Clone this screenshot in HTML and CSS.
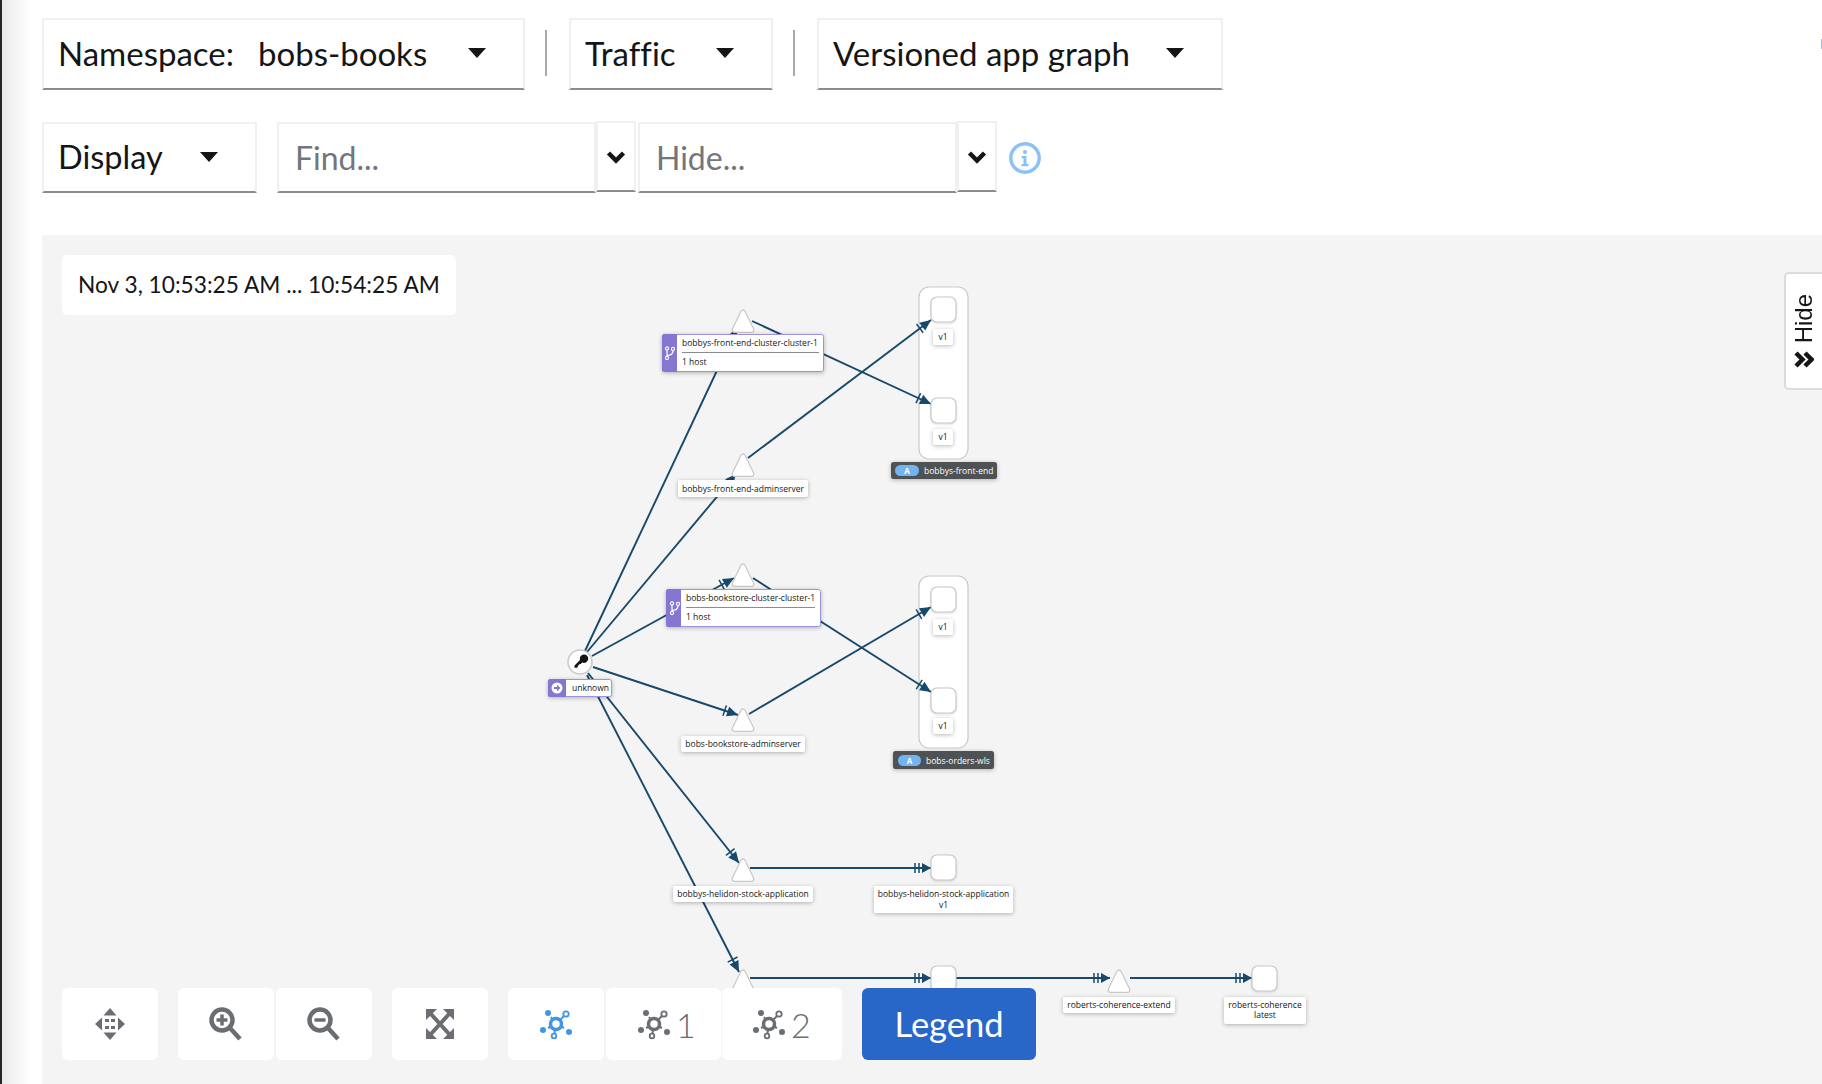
FILE: index.html
```html
<!DOCTYPE html>
<html lang="en">
<head>
  <meta charset="UTF-8">
  <title>Graph</title>
  <link rel="stylesheet" href="styles.css">
</head>
<body>
  <div id="page">
    <i class="corner-mark"></i>

    <div class="toolbar row-one">
      <div class="select select-namespace">
        <span class="select-label">Namespace:</span><span>bobs-books</span><i class="caret"></i>
      </div>
      <i class="sep"></i>
      <div class="select select-traffic"><span>Traffic</span><i class="caret"></i></div>
      <i class="sep"></i>
      <div class="select select-graph"><span>Versioned app graph</span><i class="caret"></i></div>
    </div>

    <div class="toolbar row-two">
      <div class="select select-display"><span>Display</span><i class="caret"></i></div>
      <input class="find find-first" placeholder="Find...">
      <button class="chevron-btn">
        <svg width="20" height="14" viewBox="0 0 20 14"><path class="chevron" d="M2.500 3 10 10.500 17.500 3"/></svg>
      </button>
      <input class="find" placeholder="Hide...">
      <button class="chevron-btn">
        <svg width="20" height="14" viewBox="0 0 20 14"><path class="chevron" d="M2.500 3 10 10.500 17.500 3"/></svg>
      </button>
      <svg class="info" width="32" height="32" viewBox="0 0 32 32">
        <circle cx="16" cy="16" r="14.200" fill="none" stroke="#8bc1f7" stroke-width="3.400"/>
        <circle cx="16" cy="10" r="2" fill="#8bc1f7"/>
        <path d="M12.500 14h5v8h2v2.200h-7V22h2v-5.800h-2z" fill="#8bc1f7"/>
      </svg>
    </div>

    <div id="graph">
      <svg class="canvas" width="1780" height="849" viewBox="42 235 1780 849">
        <defs>
          <marker id="arrow" markerUnits="userSpaceOnUse" markerWidth="18" markerHeight="14" viewBox="0 -7 18 14" refX="17" refY="0" orient="auto">
            <path class="arrow-head" d="M6 -5 17 0 6 5z"/>
            <path class="arrow-tick" d="M3 -5.500V5.500"/>
          </marker>
          <marker id="arrow2" markerUnits="userSpaceOnUse" markerWidth="20" markerHeight="14" viewBox="0 -7 20 14" refX="19" refY="0" orient="auto">
            <path class="arrow-head" d="M10 -5 19 0 10 5z"/>
            <path class="arrow-tick" d="M3 -5V5M7 -5V5"/>
          </marker>
          <g id="tri">
            <path class="tri-out" d="M0 -8.500 -8.500 9H8.500z"/>
            <path class="tri-in" d="M0 -8.500 -8.500 9H8.500z"/>
          </g>
          <rect id="box" class="box" width="25" height="25" rx="6"/>
        </defs>

        <rect class="group" x="919" y="287" width="49" height="172" rx="10"/>
        <rect class="group" x="919" y="576" width="49" height="172" rx="10"/>

        <g class="edges">
          <path d="M585 651 737 328" marker-end="url(#arrow)"/>
          <path d="M752 321 931 404" marker-end="url(#arrow)"/>
          <path d="M587 652 736 474" marker-end="url(#arrow)"/>
          <path d="M748 458 931 320" marker-end="url(#arrow)"/>
          <path d="M592 656 734 578" marker-end="url(#arrow)"/>
          <path d="M753 578 931 692" marker-end="url(#arrow)"/>
          <path d="M593 667 738 715" marker-end="url(#arrow)"/>
          <path d="M749 714 931 607" marker-end="url(#arrow)"/>
          <path d="M588 673 739 863" marker-end="url(#arrow)"/>
          <path d="M587 675 739 972" marker-end="url(#arrow)"/>
          <path d="M750 868H931" marker-end="url(#arrow2)"/>
          <path d="M750 978H931" marker-end="url(#arrow2)"/>
          <path d="M956 978H1110" marker-end="url(#arrow2)"/>
          <path d="M1130 978H1252" marker-end="url(#arrow2)"/>
        </g>

        <use href="#tri" x="743" y="321"/>
        <use href="#tri" x="743" y="465"/>
        <use href="#tri" x="743" y="575"/>
        <use href="#tri" x="743" y="720"/>
        <use href="#tri" x="743" y="870"/>
        <use href="#tri" x="743" y="981"/>
        <use href="#tri" x="1119" y="981"/>

        <use href="#box" x="931" y="297"/>
        <use href="#box" x="931" y="398"/>
        <use href="#box" x="931" y="587"/>
        <use href="#box" x="931" y="688"/>
        <use href="#box" x="931" y="855"/>
        <use href="#box" x="931" y="966"/>
        <use href="#box" x="1252" y="966"/>

        <!-- cluster boxes -->
        <rect class="cluster-box" x="662.500" y="334.500" width="161" height="37" rx="2"/>
        <path class="cluster-side" d="M664.500 334H677V372H664.500a2.500 2.500 0 0 1-2.500-2.500V336.500a2.500 2.500 0 0 1 2.500-2.500z"/>
        <path class="cluster-icon" transform="translate(660 346)" d="M7 3V12M7 9.500c4 0 6-1.500 6-5"/>
        <g class="cluster-dots" transform="translate(660 346)"><circle cx="7" cy="2.500" r="1.600"/><circle cx="7" cy="12" r="1.600"/><circle cx="13" cy="3" r="1.600"/></g>
        <text class="label" x="682" y="346">bobbys-front-end-cluster-cluster-1</text>
        <path class="cluster-rule" d="M682 352.500H819"/>
        <text class="label" x="682" y="365">1 host</text>

        <rect class="cluster-box" x="666.500" y="589.500" width="154" height="37" rx="2"/>
        <path class="cluster-side" d="M668.500 589H681V627H668.500a2.500 2.500 0 0 1-2.500-2.500V591.500a2.500 2.500 0 0 1 2.500-2.500z"/>
        <path class="cluster-icon" transform="translate(665 601)" d="M7 3V12M7 9.500c4 0 6-1.500 6-5"/>
        <g class="cluster-dots" transform="translate(665 601)"><circle cx="7" cy="2.500" r="1.600"/><circle cx="7" cy="12" r="1.600"/><circle cx="13" cy="3" r="1.600"/></g>
        <text class="label" x="686" y="601">bobs-bookstore-cluster-cluster-1</text>
        <path class="cluster-rule" d="M686 607.500H815"/>
        <text class="label" x="686" y="620">1 host</text>

        <!-- version labels -->
        <rect class="tag" x="933" y="329" width="20" height="16" rx="2"/><text class="label mid" x="943" y="340">v1</text>
        <rect class="tag" x="933" y="429" width="20" height="16" rx="2"/><text class="label mid" x="943" y="440">v1</text>
        <rect class="tag" x="933" y="619" width="20" height="16" rx="2"/><text class="label mid" x="943" y="630">v1</text>
        <rect class="tag" x="933" y="718" width="20" height="16" rx="2"/><text class="label mid" x="943" y="729">v1</text>

        <!-- app group labels -->
        <rect class="group-tag" x="891" y="462" width="106" height="17" rx="2.500"/>
        <rect class="pill" x="895" y="465" width="24" height="11" rx="5.500"/>
        <text class="pill-text" x="907" y="473.500">A</text>
        <text class="label on-dark" x="924" y="473.500">bobbys-front-end</text>

        <rect class="group-tag" x="893" y="751" width="101" height="18" rx="2.500"/>
        <rect class="pill" x="898" y="755" width="23" height="11" rx="5.500"/>
        <text class="pill-text" x="909.500" y="763.500">A</text>
        <text class="label on-dark" x="926" y="763.500">bobs-orders-wls</text>

        <!-- service and workload labels -->
        <rect class="tag" x="678" y="480" width="130" height="17" rx="2"/><text class="label mid" x="743" y="492">bobbys-front-end-adminserver</text>
        <rect class="tag" x="681" y="736" width="124" height="16" rx="2"/><text class="label mid" x="743" y="747">bobs-bookstore-adminserver</text>
        <rect class="tag" x="673" y="886" width="140" height="16" rx="2"/><text class="label mid" x="743" y="897">bobbys-helidon-stock-application</text>
        <rect class="tag" x="874" y="886" width="139" height="27" rx="2"/>
        <text class="label mid" x="943.500" y="897">bobbys-helidon-stock-application</text>
        <text class="label mid" x="943.500" y="908">v1</text>
        <rect class="tag" x="1063" y="997" width="112" height="16" rx="2"/><text class="label mid" x="1119" y="1008">roberts-coherence-extend</text>
        <rect class="tag" x="1224" y="997" width="82" height="27" rx="2"/>
        <text class="label mid" x="1265" y="1008">roberts-coherence</text>
        <text class="label mid" x="1265" y="1018">latest</text>

        <!-- unknown node -->
        <circle class="source" cx="580" cy="662" r="12"/>
        <path class="key" d="M583.500 654.500a4.200 4.200 0 1 1-1.300 7.900l-1.500 1.500h-1.400v1.400h-1.400v1.400l-1.100 1.100h-2.300v-2.300l5.500-5.500a4.200 4.200 0 0 1 3.800-5.500z"/>
        <rect class="cluster-box" x="548.500" y="679.500" width="63" height="17" rx="2"/>
        <path class="cluster-side" d="M550.500 679H566V697H550.500a2.500 2.500 0 0 1-2.500-2.500V681.500a2.500 2.500 0 0 1 2.500-2.500z"/>
        <circle cx="557" cy="688" r="5.500" fill="#fff"/>
        <path d="M554 687h3v-2.500l3.300 3.500-3.300 3.500V689h-3z" fill="#8476d1"/>
        <text class="label" x="572" y="691">unknown</text>
      </svg>

      <div class="time-box">Nov 3, 10:53:25 AM ... 10:54:25 AM</div>

      <div class="hide-tab">
        <span class="hide-text">Hide</span>
        <svg width="20" height="17" viewBox="0 0 20 17"><path class="chevron" d="M2 2 8.500 8.500 2 15M11 2 17.500 8.500 11 15"/></svg>
      </div>

      <div class="controls">
        <div class="ctl ctl-square gap-big">
          <svg width="30" height="32" viewBox="0 0 30 32" fill="#6a6e73">
            <path d="M15 0 21.500 7.500H8.500zM15 32 8.500 24.500H21.500zM0 16 7 9.500V22.500zM30 16 23 22.500V9.500z"/>
            <path d="M10 11h4v3h-4zM16 11h4v3h-4zM10 18h4v3h-4zM16 18h4v3h-4z"/>
          </svg>
        </div>
        <div class="ctl ctl-square gap-small">
          <svg width="34" height="34" viewBox="0 0 34 34"><circle class="lens" cx="13" cy="13" r="10.500"/><path class="lens" d="M21 21 31 32"/><path class="lens-mark" d="M7.500 13H18.500M13 7.500V18.500"/></svg>
        </div>
        <div class="ctl ctl-square gap-big">
          <svg width="34" height="34" viewBox="0 0 34 34"><circle class="lens" cx="13" cy="13" r="10.500"/><path class="lens" d="M21 21 31 32"/><path class="lens-mark" d="M7.500 13H18.500"/></svg>
        </div>
        <div class="ctl ctl-square gap-big">
          <svg width="28" height="30" viewBox="0 0 28 30" fill="#6a6e73">
            <path d="M0 0H11L0 11zM28 0V11L17 0zM0 30V19L11 30zM28 30H17L28 19z"/>
            <path class="fit-cross" d="M4 4 24 26M24 4 4 26"/>
          </svg>
        </div>
        <div class="ctl ctl-square gap-small net-active">
          <svg class="net" width="34" height="34" viewBox="0 0 34 34">
            <use href="#net-icon"/>
          </svg>
        </div>
        <div class="ctl ctl-one gap-tiny net-idle">
          <svg class="net" width="34" height="34" viewBox="0 0 34 34"><use href="#net-icon"/></svg><span>1</span>
        </div>
        <div class="ctl ctl-two gap-big net-idle">
          <svg class="net" width="34" height="34" viewBox="0 0 34 34"><use href="#net-icon"/></svg><span>2</span>
        </div>
        <div class="ctl legend">Legend</div>
      </div>

      <svg class="icon-defs" width="0" height="0">
        <g id="net-icon">
          <path class="net-line" d="M17 17 12 10M17 17 27 7M17 17 9 21M17 17 25 21M17 17 15 29"/>
          <circle class="net-ring" cx="17" cy="17" r="5.500"/>
          <circle class="net-dot" cx="9" cy="6" r="3"/>
          <circle class="net-hollow" cx="27" cy="7" r="2.700"/>
          <circle class="net-dot" cx="4" cy="23" r="3"/>
          <circle class="net-dot" cx="30" cy="25" r="3"/>
          <circle class="net-hollow" cx="15" cy="29" r="2.300"/>
        </g>
      </svg>
    </div>
  </div>
</body>
</html>
```

FILE: styles.css
```css
* {
  box-sizing: border-box;
}

html, body {
  margin: 0;
  height: 100%;
  overflow: hidden;
}

body {
  background: #fff;
  font-family: "Lato", "Open Sans", sans-serif;
  font-variant-ligatures: none;
  color: #151515;
}

#page {
  position: relative;
  height: 1084px;
  padding-left: 40px;
  border-left: 2px solid #26262b;
  background: linear-gradient(to right, #eaeaea 0, #fff 28px);
}

.corner-mark {
  position: absolute;
  right: 0;
  top: 39px;
  width: 1px;
  height: 10px;
  background: #a5b8e0;
}

.toolbar {
  display: flex;
  align-items: flex-start;
}

.row-one {
  padding-top: 18px;
  height: 122px;
}

.row-two {
  height: 114px;
  margin-top: -1px;
}

.select {
  display: flex;
  align-items: center;
  height: 72px;
  padding: 0 37px 2px 14px;
  background: #fff;
  border: 2px solid #f0f0f0;
  border-bottom-color: #8a8d90;
  font-size: 33px;
  white-space: nowrap;
}

.select-namespace { width: 483px; }
.select-traffic { width: 204px; }
.select-graph { width: 406px; }

.select-display {
  width: 215px;
  height: 71px;
  margin-top: 1px;
  font-size: 32.500px;
}

.select-label {
  width: 200px;
}

.caret {
  margin-left: auto;
  width: 0;
  height: 0;
  border-left: 9.500px solid transparent;
  border-right: 9.500px solid transparent;
  border-top: 10px solid #151515;
}

.sep {
  width: 2px;
  height: 46px;
  margin: 12px 20px 0 20px;
  background: #a8aaad;
}

.select-traffic, .select-graph {
  margin-left: 2px;
}

.find {
  width: 319px;
  height: 71px;
  margin-top: 1px;
  padding: 0 16px;
  background: #fff;
  border: 2px solid #f0f0f0;
  border-bottom-color: #8a8d90;
  border-radius: 0;
  outline: none;
  font-family: inherit;
  font-size: 32px;
  color: #151515;
}

.find-first {
  margin-left: 20px;
}

.find::placeholder {
  color: #72767b;
  opacity: 1;
}

.chevron-btn {
  display: flex;
  align-items: center;
  justify-content: center;
  width: 40px;
  height: 71px;
  padding: 0;
  background: #fff;
  border: 2px solid #f0f0f0;
  border-bottom-color: #8a8d90;
  border-radius: 0;
}

.chevron-btn + .find {
  margin-left: 2px;
}

.chevron {
  fill: none;
  stroke: #151515;
  stroke-width: 4.500;
}

.info {
  margin: 21px 0 0 12px;
}

#graph {
  position: relative;
  height: 849px;
  background: #f4f4f4;
  overflow: hidden;
}

.canvas {
  position: absolute;
  left: 0;
  top: 0;
}

.icon-defs {
  position: absolute;
}

/* graph */
.edges path {
  fill: none;
  stroke: #17496c;
  stroke-width: 1.900;
}

.arrow-head {
  fill: #17496c;
}

.arrow-tick {
  fill: none;
  stroke: #17496c;
  stroke-width: 1.500;
}

.tri-out {
  fill: #fff;
  stroke: #c9c9c9;
  stroke-width: 6;
  stroke-linejoin: round;
}

.tri-in {
  fill: #fff;
  stroke: #fff;
  stroke-width: 3.500;
  stroke-linejoin: round;
}

.box, .group {
  fill: #fff;
  stroke: #c9c9c9;
  stroke-width: 1.200;
}

.box {
  filter: drop-shadow(0 1px 1px rgba(0, 0, 0, .12));
}

.tag, .cluster-box, .group-tag {
  filter: drop-shadow(0 1px 2px rgba(0, 0, 0, .28));
}

.tag {
  fill: #fff;
}

.cluster-box {
  fill: #fff;
  stroke: #9d92dd;
  stroke-width: 1;
}

.cluster-side {
  fill: #8476d1;
}

.cluster-icon {
  fill: none;
  stroke: #fff;
  stroke-width: 1.200;
}

.cluster-dots circle {
  fill: #8476d1;
  stroke: #fff;
  stroke-width: 1.100;
}

.cluster-rule {
  stroke: #8a8d90;
  stroke-width: 1;
}

.label {
  font-family: "Open Sans", sans-serif;
  font-size: 8.500px;
  fill: #151515;
}

.mid {
  text-anchor: middle;
}

.on-dark {
  fill: #fff;
}

.group-tag {
  fill: #4f5255;
}

.pill {
  fill: #73b4f0;
}

.pill-text {
  font-family: "Open Sans", sans-serif;
  font-size: 8px;
  font-weight: 700;
  text-anchor: middle;
  fill: #fff;
}

.source {
  fill: #fff;
  stroke: #c9c9c9;
  stroke-width: 1.500;
}

.key {
  fill: #151515;
}

/* overlays */
.time-box {
  position: absolute;
  left: 20px;
  top: 20px;
  width: 394px;
  height: 60px;
  padding-left: 16px;
  line-height: 60px;
  background: #fff;
  border-radius: 5px;
  font-size: 22.700px;
  white-space: nowrap;
}

.hide-tab {
  position: absolute;
  right: 0;
  top: 37px;
  display: flex;
  flex-direction: column;
  align-items: center;
  gap: 8px;
  width: 38px;
  height: 118px;
  padding-top: 20px;
  background: #fff;
  border: 2px solid #dcdcdc;
  border-right: 0;
  border-radius: 5px 0 0 5px;
}

.hide-text {
  writing-mode: vertical-rl;
  transform: rotate(180deg);
  font-family: "Liberation Sans", sans-serif;
  font-size: 24px;
  line-height: 28px;
}

.controls {
  position: absolute;
  left: 20px;
  bottom: 24px;
  display: flex;
}

.ctl {
  display: flex;
  align-items: center;
  justify-content: center;
  height: 72px;
  background: #fff;
  border-radius: 6px;
}

.ctl-square { width: 96px; }

.ctl-one {
  width: 115px;
  gap: 5px;
  justify-content: flex-start;
  padding-left: 31px;
}

.ctl-two {
  width: 120px;
  gap: 5px;
  justify-content: flex-start;
  padding-left: 30px;
}

.ctl span {
  font-size: 34px;
  font-weight: 300;
  color: #6a6e73;
}

.gap-big { margin-right: 20px; }
.gap-small { margin-right: 2px; }
.gap-tiny { margin-right: 1px; }

.legend {
  width: 174px;
  padding-bottom: 2px;
  background: #2866c7;
  color: #fff;
  font-size: 34.500px;
}

.lens {
  fill: none;
  stroke: #6a6e73;
  stroke-width: 4.500;
}

.lens-mark {
  fill: none;
  stroke: #6a6e73;
  stroke-width: 3.500;
}

.fit-cross {
  fill: none;
  stroke: #6a6e73;
  stroke-width: 4;
}

.net-active { --net: #4394e5; }
.net-idle { --net: #6a6e73; }

.net-line {
  fill: none;
  stroke: var(--net);
  stroke-width: 2;
}

.net-ring {
  fill: #fff;
  stroke: var(--net);
  stroke-width: 3.500;
}

.net-dot {
  fill: var(--net);
}

.net-hollow {
  fill: #fff;
  stroke: var(--net);
  stroke-width: 1.800;
}
```
